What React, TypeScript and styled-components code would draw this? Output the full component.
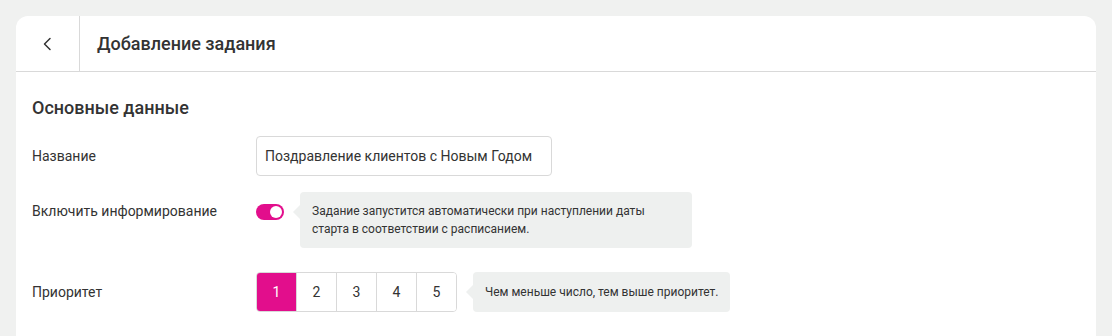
import React, { useState } from "react";
import styled, { createGlobalStyle } from "styled-components";

const GlobalStyle = createGlobalStyle`
  html, body {
    margin: 0;
    padding: 0;
    background: #f0f1f0;
    font-family: Roboto, "Noto Sans", sans-serif;
    color: #333;
  }
`;

const Page = styled.div`
  padding: 16px 16px 0;
`;

const Card = styled.div`
  background: #fff;
  border-radius: 12px 12px 0 0;
  min-height: 320px;
`;

const Header = styled.header`
  display: flex;
  align-items: stretch;
  height: 55px;
  border-bottom: 1px solid #d9d9d9;
`;

const BackButton = styled.button`
  width: 64px;
  display: flex;
  align-items: center;
  justify-content: center;
  background: transparent;
  border: none;
  border-right: 1px solid #d9d9d9;
  padding: 0;
  cursor: pointer;
  color: #333;
`;

const Title = styled.h1`
  margin: 0;
  display: flex;
  align-items: center;
  padding-left: 17px;
  font-size: 18px;
  font-weight: 500;
  color: #333;
`;

const Body = styled.div`
  padding: 24px 16px;
`;

const SectionTitle = styled.h2`
  margin: 0 0 16px;
  font-size: 18px;
  font-weight: 500;
  line-height: 24px;
  color: #333;
`;

const Row = styled.div<{ $mt?: number; $top?: boolean }>`
  display: grid;
  grid-template-columns: 224px auto;
  align-items: ${({ $top }) => ($top ? "start" : "center")};
  margin-top: ${({ $mt }) => $mt ?? 0}px;
`;

const Label = styled.span<{ $offset?: number }>`
  font-size: 14px;
  color: #333;
  margin-top: ${({ $offset }) => $offset ?? 0}px;
`;

const Field = styled.div<{ $align?: string }>`
  display: flex;
  align-items: ${({ $align }) => $align ?? "center"};
  gap: 16px;
`;

const Input = styled.input`
  width: 296px;
  height: 40px;
  box-sizing: border-box;
  border: 1px solid #d9d9d9;
  border-radius: 4px;
  padding: 0 8px;
  font-family: inherit;
  font-size: 14px;
  color: #333;
  outline: none;
`;

const Toggle = styled.button<{ $on: boolean }>`
  position: relative;
  width: 28px;
  height: 16px;
  border-radius: 8px;
  border: none;
  padding: 0;
  margin-top: 12px;
  flex-shrink: 0;
  cursor: pointer;
  background: ${({ $on }) => ($on ? "#e20e8c" : "#ccc")};

  &::after {
    content: "";
    position: absolute;
    top: 2px;
    left: ${({ $on }) => ($on ? "14px" : "2px")};
    width: 12px;
    height: 12px;
    border-radius: 50%;
    background: #fff;
  }
`;

const Hint = styled.div<{ $width?: number }>`
  position: relative;
  background: #eef0ef;
  border-radius: 4px;
  padding: 10px 12px;
  font-size: 12px;
  line-height: 18px;
  color: #333;
  width: ${({ $width }) => ($width ? `${$width}px` : "auto")};

  &::before {
    content: "";
    position: absolute;
    left: -7px;
    top: 12px;
    border-top: 8px solid transparent;
    border-bottom: 8px solid transparent;
    border-right: 8px solid #eef0ef;
  }
`;

const Segments = styled.div`
  display: flex;
  border: 1px solid #d9d9d9;
  border-radius: 4px;
  overflow: hidden;
  height: 40px;
  box-sizing: border-box;
`;

const Segment = styled.button<{ $active: boolean }>`
  width: 40px;
  border: none;
  border-left: 1px solid #d9d9d9;
  padding: 0;
  font-family: inherit;
  font-size: 14px;
  cursor: pointer;
  background: ${({ $active }) => ($active ? "#e20e8c" : "#fff")};
  color: ${({ $active }) => ($active ? "#fff" : "#333")};

  &:first-child {
    border-left: none;
    width: 39px;
  }
`;

const PriorityHint = styled(Hint)`
  height: 40px;
  box-sizing: border-box;
  display: flex;
  align-items: center;
  padding: 0 12px;
`;

export default function App() {
  const [on, setOn] = useState(true);
  const [priority, setPriority] = useState(1);

  return (
    <>
      <GlobalStyle />
      <Page>
        <Card>
          <Header>
            <BackButton aria-label="Назад">
              <svg width="16" height="16" viewBox="0 0 16 16" fill="none">
                <path d="M10 2.5 4.5 8l5.5 5.5" stroke="#333" strokeWidth="1.5" strokeLinecap="round" strokeLinejoin="round" />
              </svg>
            </BackButton>
            <Title>Добавление задания</Title>
          </Header>
          <Body>
            <SectionTitle>Основные данные</SectionTitle>
            <Row>
              <Label>Название</Label>
              <Field>
                <Input defaultValue="Поздравление клиентов с Новым Годом" />
              </Field>
            </Row>
            <Row $mt={16} $top>
              <Label $offset={11}>Включить информирование</Label>
              <Field $align="flex-start">
                <Toggle $on={on} onClick={() => setOn(!on)} />
                <Hint $width={368}>
                  Задание запустится автоматически при наступлении даты старта в соответствии с расписанием.
                </Hint>
              </Field>
            </Row>
            <Row $mt={24}>
              <Label>Приоритет</Label>
              <Field>
                <Segments>
                  {[1, 2, 3, 4, 5].map((n) => (
                    <Segment key={n} $active={priority === n} onClick={() => setPriority(n)}>
                      {n}
                    </Segment>
                  ))}
                </Segments>
                <PriorityHint>Чем меньше число, тем выше приоритет.</PriorityHint>
              </Field>
            </Row>
          </Body>
        </Card>
      </Page>
    </>
  );
}
